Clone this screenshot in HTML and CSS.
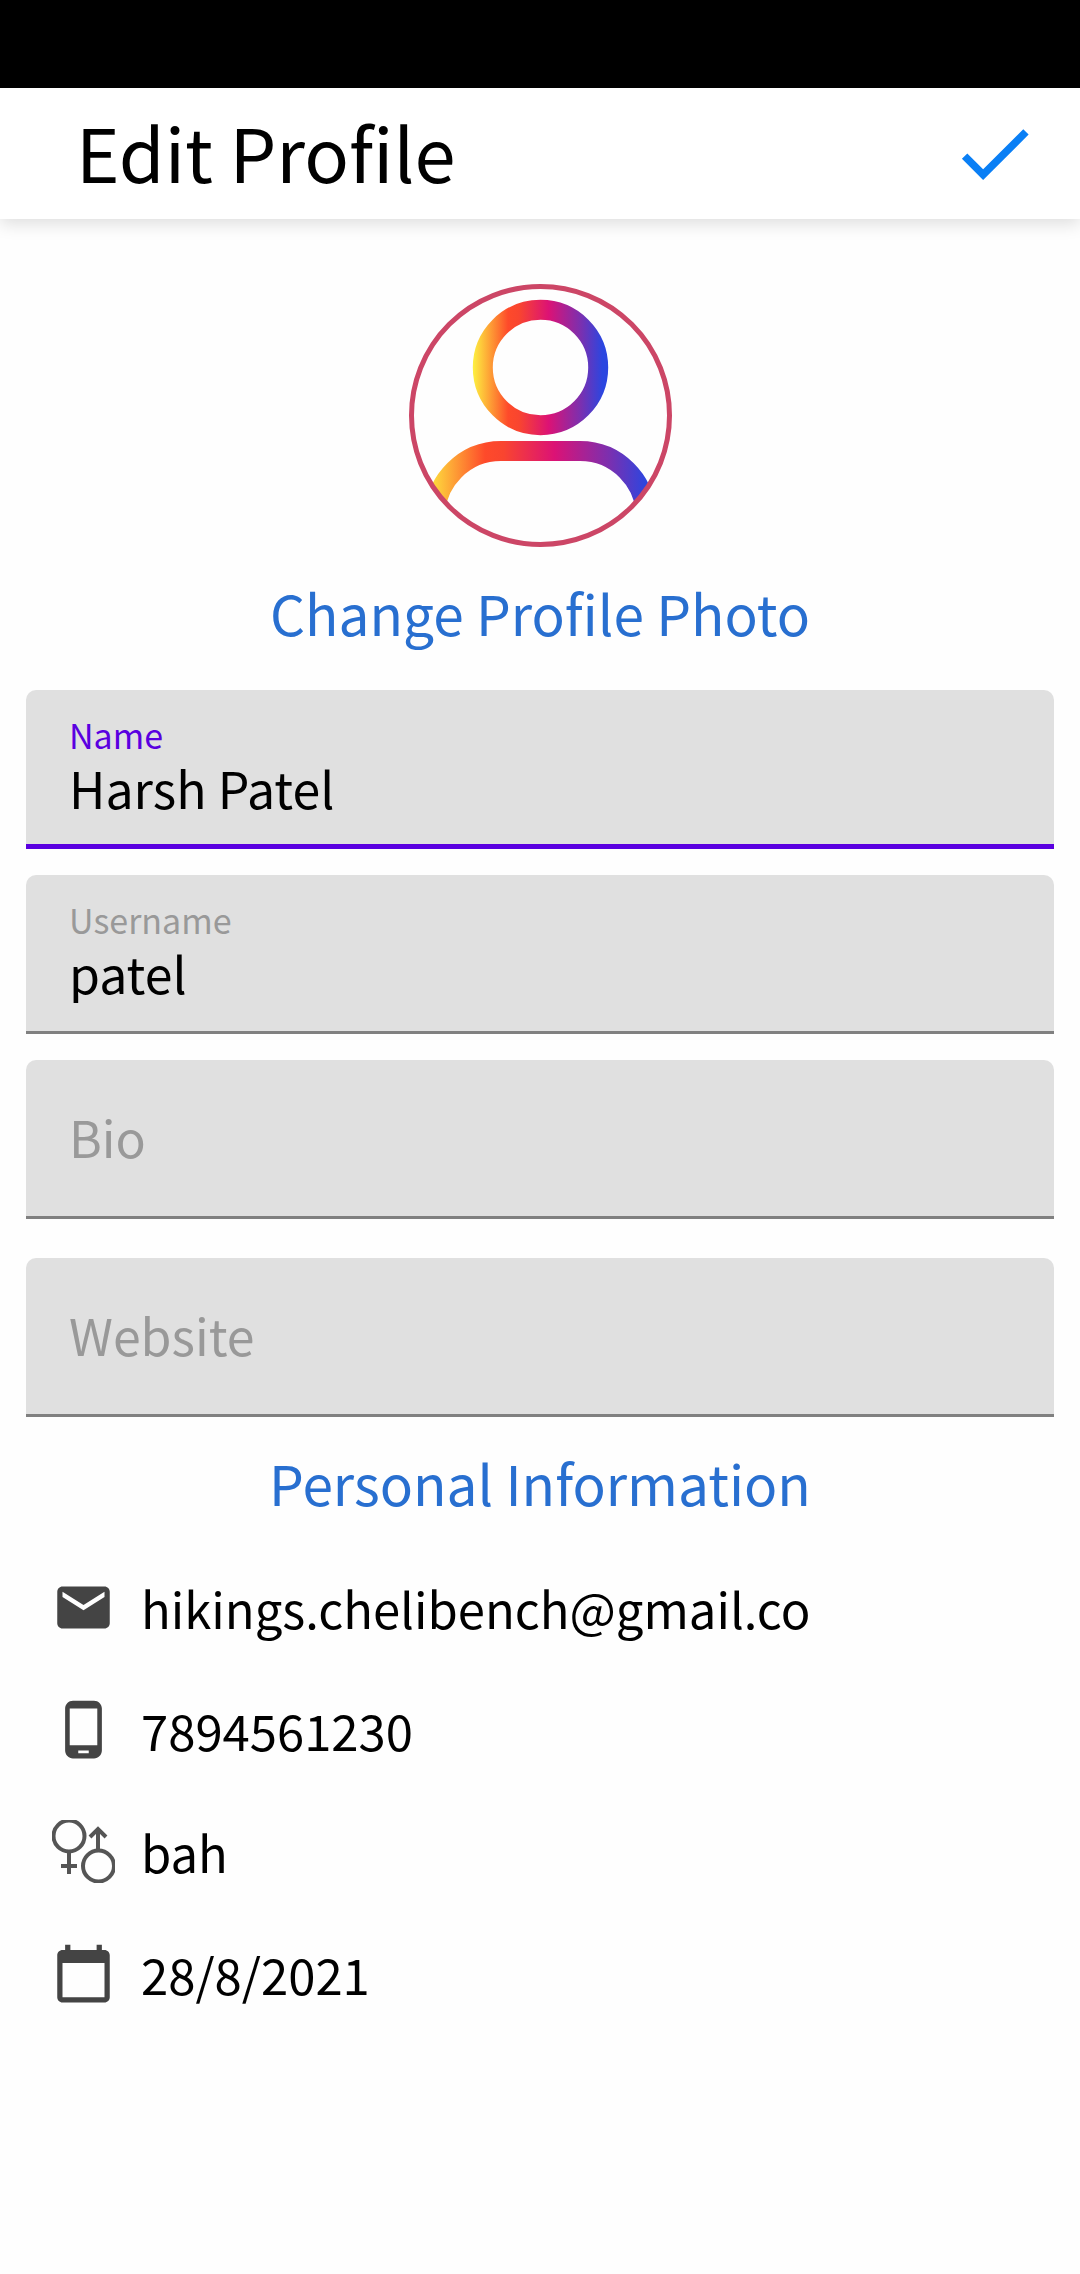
FILE: index.html
```html
<!DOCTYPE html>
<html lang="en">
<head>
<meta charset="utf-8">
<meta name="viewport" content="width=device-width, initial-scale=1">
<title>Edit Profile</title>
<link rel="stylesheet" href="styles.css">
</head>
<body>
<div class="status-bar"></div>
<header class="app-bar">
  <h1 class="title">Edit Profile</h1>
  <button class="save" type="submit" form="profile" aria-label="Save">
    <svg class="save-icon" viewBox="0 0 24 24" aria-hidden="true"><path d="M9 16.17 4.83 12l-1.42 1.41L9 19 21 7l-1.41-1.41z"/></svg>
  </button>
</header>
<main class="content">
  <svg class="avatar" viewBox="0 0 263 263" aria-hidden="true">
    <defs>
      <linearGradient id="head" gradientUnits="userSpaceOnUse" x1="64" y1="0" x2="199" y2="0">
        <stop offset="0" stop-color="#fdf040"/><stop offset="0.26" stop-color="#fe4a2a"/><stop offset="0.34" stop-color="#f9452f"/><stop offset="0.56" stop-color="#dc1275"/><stop offset="0.8" stop-color="#7a30b0"/><stop offset="0.96" stop-color="#2b46e0"/>
      </linearGradient>
      <linearGradient id="body" gradientUnits="userSpaceOnUse" x1="16" y1="0" x2="247" y2="0">
        <stop offset="0" stop-color="#fdf040"/><stop offset="0.26" stop-color="#fe4a2a"/><stop offset="0.34" stop-color="#f9452f"/><stop offset="0.56" stop-color="#dc1275"/><stop offset="0.8" stop-color="#7a30b0"/><stop offset="0.96" stop-color="#2b46e0"/>
      </linearGradient>
      <clipPath id="round"><circle cx="131.5" cy="131.5" r="129"/></clipPath>
    </defs>
    <g clip-path="url(#round)" fill="none" stroke-width="20">
      <circle cx="131.5" cy="83.5" r="57.7" stroke="url(#head)"/>
      <path d="M26 233A66 66 0 0 1 92 167H171A66 66 0 0 1 237 233" stroke="url(#body)"/>
    </g>
    <circle cx="131.5" cy="131.5" r="129" fill="none" stroke="#cc4666" stroke-width="5"/>
  </svg>
  <button class="heading change-photo" type="button">Change Profile Photo</button>
  <form class="fields" id="profile">
    <div class="field field-active">
      <label class="label" for="name">Name</label>
      <input class="input" id="name" type="text" value="Harsh Patel">
    </div>
    <div class="field">
      <label class="label" for="username">Username</label>
      <input class="input" id="username" type="text" value="patel">
    </div>
    <div class="field">
      <input class="input" type="text" placeholder="Bio" aria-label="Bio">
    </div>
    <div class="field field-spaced">
      <input class="input" type="text" placeholder="Website" aria-label="Website">
    </div>
  </form>
  <h2 class="heading">Personal Information</h2>
  <ul class="info">
    <li class="info-row">
      <svg class="icon" viewBox="0 0 24 24" aria-hidden="true"><path d="M20 4H4c-1.1 0-1.99.9-1.99 2L2 18c0 1.1.9 2 2 2h16c1.1 0 2-.9 2-2V6c0-1.1-.9-2-2-2zm0 4-8 5-8-5V6l8 5 8-5v2z"/></svg>
      <span>hikings.chelibench@gmail.co</span>
    </li>
    <li class="info-row">
      <svg class="icon" viewBox="0 0 24 24" aria-hidden="true"><path d="M16 1H8C6.34 1 5 2.34 5 4v16c0 1.66 1.34 3 3 3h8c1.66 0 3-1.34 3-3V4c0-1.66-1.34-3-3-3zm-2 20h-4v-1h4v1zm3.25-3H6.75V4h10.5v14z"/></svg>
      <span>7894561230</span>
    </li>
    <li class="info-row">
      <svg class="icon icon-line" viewBox="0 0 63 63" aria-hidden="true"><circle cx="17" cy="16" r="15.5"/><path d="M17 32V54M9 46H25M46 30V9M38 17L46 9L54 17"/><circle cx="46.5" cy="46" r="15.5"/></svg>
      <span>bah</span>
    </li>
    <li class="info-row">
      <svg class="icon" viewBox="0 0 24 24" aria-hidden="true"><path d="M20 3h-1V1h-2v2H7V1H5v2H4c-1.1 0-2 .9-2 2v16c0 1.1.9 2 2 2h16c1.1 0 2-.9 2-2V5c0-1.1-.9-2-2-2zm0 18H4V8h16v13z"/></svg>
      <span>28/8/2021</span>
    </li>
  </ul>
</main>
</body>
</html>
```
FILE: styles.css
```css
* {
  box-sizing: border-box;
}

body {
  margin: 0;
  background: #fefefe;
  color: #000;
  font-family: "Noto Sans CJK SC", "Noto Sans", sans-serif;
  font-size: 50px;
}

button,
input {
  margin: 0;
  padding: 0;
  border: 0;
  background: none;
  font: inherit;
  color: inherit;
}

.status-bar {
  height: 88px;
  background: #000;
}

.app-bar {
  display: flex;
  align-items: center;
  justify-content: space-between;
  height: 131px;
  padding: 0 40px 0 76px;
  background: #fff;
  box-shadow: 0 5px 16px rgba(0, 0, 0, 0.13);
}

.title {
  margin: 0;
  padding-bottom: 5px;
  font-size: 74px;
  font-weight: 400;
  line-height: 120px;
}

.save {
  display: flex;
}

.save-icon {
  width: 91px;
  height: 91px;
  fill: #0a7ff5;
}

.content {
  display: flex;
  flex-direction: column;
  align-items: center;
  padding: 65px 26px;
}

.avatar {
  width: 263px;
  height: 263px;
}

.heading {
  margin: 0;
  color: #286fd0;
  font-size: 55px;
  font-weight: 400;
  line-height: 80px;
}

.change-photo {
  margin: 25px 0 38px;
}

.fields {
  display: flex;
  flex-direction: column;
  gap: 26px;
  align-self: stretch;
  margin-bottom: 25px;
}

.field {
  display: flex;
  flex-direction: column;
  justify-content: center;
  height: 159px;
  padding: 0 43px 4px;
  border-bottom: 3px solid #808080;
  border-radius: 10px 10px 0 0;
  background: #e0e0e0;
}

.field-active {
  padding-bottom: 2px;
  border-bottom: 5px solid #5a00e0;
}

.field-spaced {
  margin-top: 13px;
}

.label {
  color: #999;
  font-size: 34px;
  line-height: 42px;
}

.field-active .label {
  color: #5a00e0;
}

.input {
  width: 100%;
  height: 62px;
  outline: 0;
}

.input::placeholder {
  color: #999;
  opacity: 1;
}

.info {
  align-self: stretch;
  margin: 24px 0 0;
  padding: 0 26px;
  font-size: 49px;
  list-style: none;
}

.info-row {
  display: flex;
  align-items: center;
  gap: 26px;
  height: 122px;
}

.icon {
  flex: none;
  width: 63px;
  height: 63px;
  fill: #444;
}

.icon-line {
  fill: none;
  stroke: #555;
  stroke-width: 4;
}
```
